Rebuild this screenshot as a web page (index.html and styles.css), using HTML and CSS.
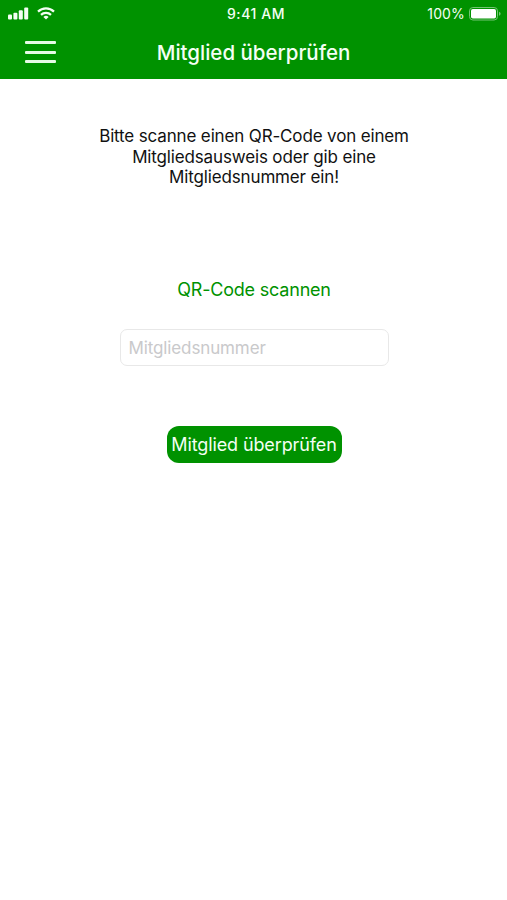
FILE: index.html
```html
<!DOCTYPE html>
<html lang="de">
<head>
<meta charset="utf-8">
<title>Mitglied überprüfen</title>
<link rel="stylesheet" href="styles.css">
</head>
<body>
<header class="header">
  <div class="status">
    <div class="signals">
      <svg width="21" height="13" viewBox="0 0 21 13" fill="#f4fff4"><rect x="0" y="7.5" width="4" height="5" rx="1"/><rect x="5.4" y="5.7" width="4" height="6.8" rx="1"/><rect x="10.8" y="3.2" width="4" height="9.3" rx="1"/><rect x="16.2" y="0.5" width="4" height="12" rx="1"/></svg>
      <svg class="wifi" width="18" height="13" viewBox="0 0 18 13" fill="none" stroke="#f4fff4" stroke-width="2.2"><path d="M1 4.6a11.6 11.6 0 0 1 16 0M4 7.9a7.2 7.2 0 0 1 10 0"/><path d="M9 12.6L6.4 10a3.7 3.7 0 0 1 5.2 0z" fill="#f4fff4" stroke="none"/></svg>
    </div>
    <time class="time">9:41 AM</time>
    <div class="power"><span class="percent">100%</span>
      <svg width="32" height="14" viewBox="0 0 32 14"><rect x=".5" y=".5" width="28" height="12.5" rx="3.4" fill="none" stroke="#74c474"/><rect x="2" y="2" width="25" height="9.5" rx="1.8" fill="#fff"/><path d="M30 4.7q1.6.7 1.6 2T30 8.7z" fill="#74c474"/></svg>
    </div>
  </div>
  <div class="bar">
    <button class="menu" aria-label="Menü"><span></span><span></span><span></span></button>
    <h1 class="title">Mitglied überprüfen</h1>
  </div>
</header>
<main class="content">
  <p class="intro"><span>Bitte scanne einen QR-Code von einem</span><br><span>Mitgliedsausweis oder gib eine</span><br><span>Mitgliedsnummer ein!</span></p>
  <a class="scan">QR-Code scannen</a>
  <input class="number" placeholder="Mitgliedsnummer">
  <button class="check">Mitglied überprüfen</button>
</main>
</body>
</html>
```
FILE: styles.css
```css
* { box-sizing: border-box; }
body { margin: 0; height: 900px; background: #fff; color: #111; font-family: Inter, sans-serif; }
button { border: 0; padding: 0; font-family: inherit; }
.header { height: 79px; background: #009200; color: #f4fff4; }
.status { height: 27px; display: grid; grid-template-columns: 1fr auto 1fr; align-items: center; padding: 0 6px 0 8px; }
.signals { display: flex; }
.wifi { margin-left: 8px; }
.time { font-size: 14px; font-weight: 500; letter-spacing: .55px; margin-left: 3px; }
.power { display: flex; justify-content: flex-end; align-items: center; gap: 4px; }
.percent { font-size: 14px; letter-spacing: .15px; }
.bar { height: 52px; display: grid; grid-template-columns: 1fr auto 1fr; align-items: center; }
.menu { width: 31px; height: 22px; margin: -2px 0 0 25px; background: none; display: flex; flex-direction: column; justify-content: space-between; }
.menu span { width: 31px; height: 3px; border-radius: 1px; background: #e6fbe6; }
.title { margin: 0; font-size: 20.5px; line-height: 24px; font-weight: 500; letter-spacing: 0; white-space: nowrap; }
.content { display: flex; flex-direction: column; align-items: center; padding-left: 1px; }
.intro { margin: 47px 0 0; text-align: center; font-size: 17px; line-height: 20.7px; letter-spacing: -.15px; white-space: nowrap; }
.scan { margin-top: 91px; font-size: 18px; line-height: 22px; letter-spacing: -.2px; color: #009200; }
.number { width: 269px; height: 37px; margin-top: 28px; padding: 0 8px; border: 1px solid #e8e8e8; border-radius: 7px; font: 17px Inter, sans-serif; letter-spacing: -.12px; }
.number::placeholder { color: #c9c9cb; opacity: 1; }
.check { width: 175px; height: 37px; margin-top: 60px; padding-bottom: 1px; border-radius: 12px; background: #009200; color: #f4fff4; font-size: 18px; letter-spacing: -.12px; white-space: nowrap; }
```
